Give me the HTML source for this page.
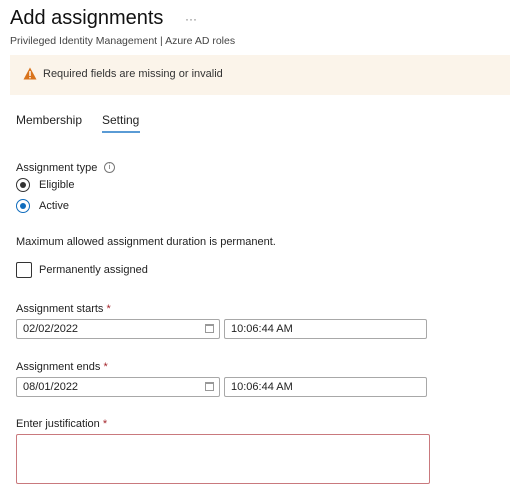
<!DOCTYPE html><html><head><style>
body{margin:0;width:510px;height:470px;overflow:hidden;background:#fff;font-family:"Liberation Sans",sans-serif;color:#222;position:relative}
.a{position:absolute}
.inp{position:absolute;border:1px solid #a8a8a8;border-radius:2px;box-sizing:border-box;font-size:11px;line-height:18px;padding-left:6px;color:#222;height:20px}
.st{color:#a4262c}
</style></head><body>
<div class="a" style="left:10px;top:7px;font-size:20px;color:#111">Add assignments</div>
<div class="a" style="left:185px;top:12px;font-size:12px;color:#777">···</div>
<div class="a" style="left:10px;top:35px;font-size:10.5px;color:#444">Privileged Identity Management | Azure AD roles</div>
<div class="a" style="left:10px;top:55px;width:500px;height:40px;background:#fbf4ea"></div>
<svg class="a" style="left:23px;top:67px" width="14" height="13" viewBox="0 0 14 13"><path d="M7 0.5L13.5 12.5H0.5Z" fill="#d9731c"/><rect x="6.3" y="4" width="1.4" height="5" fill="#fff"/><rect x="6.3" y="10" width="1.4" height="1.4" fill="#fff"/></svg>
<div class="a" style="left:43px;top:68px;font-size:11px;color:#333">Required fields are missing or invalid</div>
<div class="a" style="left:16px;top:113px;font-size:12px">Membership</div>
<div class="a" style="left:102px;top:113px;font-size:12px">Setting</div>
<div class="a" style="left:102px;top:131px;width:38px;height:2px;background:#5a9bd5"></div>
<div class="a" style="left:16px;top:162px;font-size:11px">Assignment type</div>
<div class="a" style="left:104px;top:162px;width:9px;height:9px;border:1px solid #777;border-radius:50%;font-size:7px;line-height:9px;text-align:center;color:#555">i</div>
<div class="a" style="left:16px;top:178px;width:12px;height:12px;border:1px solid #333;border-radius:50%"></div>
<div class="a" style="left:20px;top:182px;width:6px;height:6px;background:#333;border-radius:50%"></div>
<div class="a" style="left:39px;top:179px;font-size:11px">Eligible</div>
<div class="a" style="left:16px;top:199px;width:12px;height:12px;border:1px solid #0f6cbd;border-radius:50%"></div>
<div class="a" style="left:20px;top:203px;width:6px;height:6px;background:#0f6cbd;border-radius:50%"></div>
<div class="a" style="left:39px;top:200px;font-size:11px">Active</div>
<div class="a" style="left:16px;top:236px;font-size:11px">Maximum allowed assignment duration is permanent.</div>
<div class="a" style="left:16px;top:262px;width:14px;height:14px;border:1px solid #333;border-radius:2px"></div>
<div class="a" style="left:39px;top:264px;font-size:11px">Permanently assigned</div>
<div class="a" style="left:16px;top:303px;font-size:11px">Assignment starts <span class="st">*</span></div>
<div class="inp" style="left:16px;top:319px;width:204px">02/02/2022</div>
<div class="a" style="left:205px;top:324px;width:9px;height:9px;border:1px solid #999;border-top:2px solid #999;box-sizing:border-box"></div>
<div class="inp" style="left:224px;top:319px;width:203px">10:06:44 AM</div>
<div class="a" style="left:16px;top:361px;font-size:11px">Assignment ends <span class="st">*</span></div>
<div class="inp" style="left:16px;top:377px;width:204px">08/01/2022</div>
<div class="a" style="left:205px;top:382px;width:9px;height:9px;border:1px solid #999;border-top:2px solid #999;box-sizing:border-box"></div>
<div class="inp" style="left:224px;top:377px;width:203px">10:06:44 AM</div>
<div class="a" style="left:16px;top:418px;font-size:11px">Enter justification <span class="st">*</span></div>
<div class="a" style="left:16px;top:434px;width:414px;height:50px;border:1px solid #c9797d;border-radius:2px;box-sizing:border-box"></div>
</body></html>
